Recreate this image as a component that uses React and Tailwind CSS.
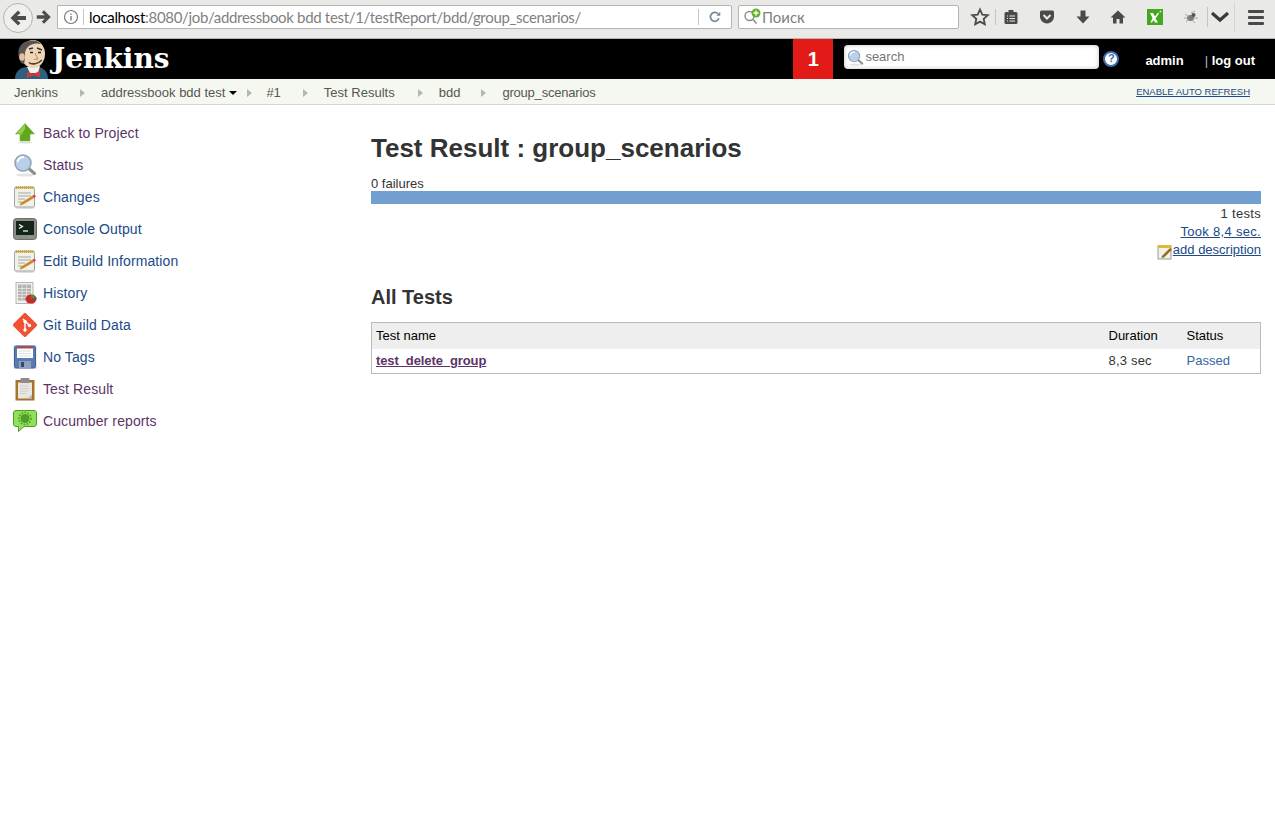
const sans = "font-['Liberation_Sans',Arial,sans-serif]";

const BackArrow = ({ className }) => (
    <svg viewBox="0 0 20 20" className={className}>
        <path d="M2.5 10 L10 2.5 L12.5 5 L9 8 H18 V12 H9 L12.5 15 L10 17.5 Z" fill="#4d4d4d" />
    </svg>
);

const ForwardArrow = ({ className }) => (
    <svg viewBox="0 0 20 20" className={className}>
        <path d="M17.5 10 L10 2.5 L7.5 5 L11 8 H2 V12 H11 L7.5 15 L10 17.5 Z" fill="#4d4d4d" />
    </svg>
);

const Butler = () => (
    <svg viewBox="0 0 36 40" className="h-10 w-9 shrink-0">
        <path d="M1 40 C1 33 5 29 12 28 L24 28 C30 29 34 33 34 40 Z" fill="#2f5f80" />
        <path d="M13 28 L26 27 L24 34 L16 34 Z" fill="#f3f1ea" />
        <path d="M13 33 L19 35 L26 32 L26 38 L19 36.5 L13 39 Z" fill="#d33833" />
        <ellipse cx="19" cy="15" rx="12" ry="14" fill="#f0d6b7" />
        <path d="M7 24 C2 14 4 4 14 2 C18 1 24 1 27 5 C19 3 12 7 11 14 C11 18 11 21 10 25 Z" fill="#555555" />
        <ellipse cx="8" cy="18" rx="2.8" ry="3.8" fill="#e7bfa0" />
        <path d="M15 10 L19 9 M23 9 L28 11" stroke="#333" strokeWidth="1.4" fill="none" />
        <path d="M16 13.5 h3 M24 13.5 h3" stroke="#222" strokeWidth="1.5" />
        <path d="M21 14 L24 20 L20 20.5" stroke="#b98a6a" strokeWidth="1" fill="none" />
        <path d="M15 23.5 C18 26 24 25 28 21" stroke="#5a3a2a" strokeWidth="1.6" fill="none" />
    </svg>
);

const Magnifier = ({ size = 'h-6 w-6' }) => (
    <svg viewBox="0 0 24 24" className={`${size} shrink-0`}>
        <ellipse cx="12" cy="22" rx="9" ry="1.6" fill="#e4e4e4" />
        <path d="M15 15 L21.5 20.5" stroke="#8d8d8d" strokeWidth="3" strokeLinecap="round" />
        <circle cx="10" cy="10" r="8" fill="#b9d0ea" stroke="#8fa2b6" strokeWidth="1.5" />
        <path d="M4.5 9 C5 6 7.5 4 11 4" stroke="#fff" strokeWidth="2" fill="none" />
    </svg>
);

const Notepad = () => (
    <svg viewBox="0 0 24 24" className="h-6 w-6 shrink-0">
        <ellipse cx="12" cy="23" rx="10" ry="1" fill="#dddddd" />
        <rect x="1.5" y="2.5" width="20" height="19.5" rx="1" fill="#f2f1e9" stroke="#a5a5a0" />
        <path d="M2.5 2.5 H20.5" stroke="#c9a63d" strokeWidth="3" strokeDasharray="1.4 0.7" />
        <path d="M5 8 H18 M5 11 H18 M5 14 H12 M5 17 H9" stroke="#a8a8a4" strokeWidth="1" />
        <path d="M7.5 18 L19 11 L21 13 L10 19.5 L7 20.5 Z" fill="#c98a2e" />
        <path d="M19 11 L21 13 L23 11.5 L21.5 9.5 Z" fill="#d8423a" />
    </svg>
);

const MENU = [
    { label: 'Back to Project', color: 'text-[#5c3566]', icon: 'up' },
    { label: 'Status', color: 'text-[#5c3566]', icon: 'search' },
    { label: 'Changes', color: 'text-[#204a87]', icon: 'notepad' },
    { label: 'Console Output', color: 'text-[#204a87]', icon: 'console' },
    { label: 'Edit Build Information', color: 'text-[#204a87]', icon: 'notepad' },
    { label: 'History', color: 'text-[#204a87]', icon: 'history' },
    { label: 'Git Build Data', color: 'text-[#204a87]', icon: 'git' },
    { label: 'No Tags', color: 'text-[#204a87]', icon: 'floppy' },
    { label: 'Test Result', color: 'text-[#5c3566]', icon: 'clipboard' },
    { label: 'Cucumber reports', color: 'text-[#5c3566]', icon: 'cucumber' },
];

const MenuIcon = ({ name }) => {
    if (name === 'search') return <Magnifier />;
    if (name === 'notepad') return <Notepad />;
    if (name === 'up') {
        return (
            <svg viewBox="0 0 24 24" className="h-6 w-6 shrink-0">
                <path d="M12 2.5 L21.5 13 H17 V20 H7 V13 H2.5 Z" fill="#5fa81e" stroke="#7cb342" strokeWidth="0.6" />
                <path d="M12 3 L3.5 12.5 H7.5 V15 L12 8 Z" fill="#95cf4e" />
                <ellipse cx="12" cy="21.5" rx="7" ry="1" fill="#dddddd" />
            </svg>
        );
    }
    if (name === 'console') {
        return (
            <svg viewBox="0 0 24 24" className="h-6 w-6 shrink-0">
                <rect x="0.5" y="1.5" width="23" height="21" rx="3" fill="#8b8d88" stroke="#6c6e6a" />
                <rect x="3" y="4" width="18" height="14" fill="#16251a" />
                <path d="M6 7.5 L9.5 9.5 L6 11.5" stroke="#fff" strokeWidth="1.2" fill="none" />
                <path d="M10 14 H15" stroke="#fff" strokeWidth="1.2" />
                <rect x="16" y="19.5" width="1.5" height="1" fill="#8ae234" />
            </svg>
        );
    }
    if (name === 'history') {
        return (
            <svg viewBox="0 0 24 24" className="h-6 w-6 shrink-0">
                <rect x="3" y="1.5" width="17" height="21" fill="#f0f0ee" stroke="#b5b5b5" />
                <rect x="5" y="3.5" width="13" height="16" fill="#b4b5b2" />
                <path d="M5 7.5 H18 M5 10.5 H18 M5 13.5 H18 M5 16.5 H18 M9 3.5 V19.5 M13.5 3.5 V19.5" stroke="#e4e4e2" strokeWidth="0.8" />
                <ellipse cx="18" cy="18" rx="5.5" ry="4.5" fill="#cc2a2a" />
                <path d="M18 18 L18 13.5 A5.5 4.5 0 0 1 23 16 Z" fill="#4e9a06" />
                <path d="M18 18 L23 16 A5.5 4.5 0 0 1 23.5 18 Z" fill="#3465a4" />
            </svg>
        );
    }
    if (name === 'git') {
        return (
            <svg viewBox="0 0 24 24" className="h-6 w-6 shrink-0">
                <rect x="3" y="3" width="18" height="18" rx="2" transform="rotate(45 12 12)" fill="#f05033" />
                <path d="M10 6 L16.5 12.5 M12 8.5 V17" stroke="#fff" strokeWidth="1.5" fill="none" />
                <circle cx="12" cy="8.5" r="1.7" fill="#fff" />
                <circle cx="16.5" cy="12.5" r="1.7" fill="#fff" />
                <circle cx="12" cy="17" r="1.7" fill="#fff" />
            </svg>
        );
    }
    if (name === 'floppy') {
        return (
            <svg viewBox="0 0 24 24" className="h-6 w-6 shrink-0">
                <rect x="0" y="0" width="24" height="24" fill="#eeeeee" />
                <rect x="1.5" y="1" width="21" height="22" rx="1.5" fill="#5a7bb0" stroke="#3f5f94" />
                <rect x="4" y="2" width="16" height="11" fill="#ffffff" />
                <rect x="4" y="2" width="16" height="1.5" fill="#d63a32" />
                <path d="M6 6 H18 M6 8.5 H18 M6 11 H18" stroke="#dddddd" strokeWidth="1" />
                <rect x="6" y="16" width="12" height="7" fill="#8ea0bb" />
                <rect x="8" y="17" width="3" height="5" fill="#35496b" />
            </svg>
        );
    }
    if (name === 'clipboard') {
        return (
            <svg viewBox="0 0 24 24" className="h-6 w-6 shrink-0">
                <rect x="2.5" y="3" width="19" height="20.5" rx="0.5" fill="#a8722a" />
                <rect x="5" y="5.5" width="14" height="16" fill="#e8e6e0" />
                <path d="M7 9 H15 M7 11.5 H16 M7 14 H15 M7 16.5 H13" stroke="#d2d0ca" strokeWidth="1.2" />
                <path d="M19 21.5 H15 L19 17.5 Z" fill="#b8b6b0" />
                <rect x="7.5" y="1" width="9" height="5" rx="1" fill="#8c8c88" />
            </svg>
        );
    }
    return (
        <svg viewBox="0 0 24 24" className="h-6 w-6 shrink-0">
            <path d="M3 1.5 H21 C22.5 1.5 23.5 2.5 23.5 4 V15 C23.5 16.5 22.5 17.5 21 17.5 H11 L5.5 22.5 V17.5 H3 C1.5 17.5 0.5 16.5 0.5 15 V4 C0.5 2.5 1.5 1.5 3 1.5 Z" fill="#8fe05a" stroke="#4f9e2a" />
            <circle cx="12" cy="9.5" r="4.5" fill="#4f9e2a" />
            <circle cx="12" cy="9.5" r="6" fill="none" stroke="#4f9e2a" strokeWidth="1.6" strokeDasharray="1.6 1.4" />
        </svg>
    );
};

const CRUMBS = [
    { label: 'Jenkins', text: 'mr-[22px]', arrow: 'mr-4' },
    { label: 'addressbook bdd test', arrow: 'mr-[14px]', menu: true },
    { label: '#1', text: 'mr-[22px]', arrow: 'mr-4' },
    { label: 'Test Results', text: 'mr-[23px]', arrow: 'mr-4' },
    { label: 'bdd', text: 'mr-[21px]', arrow: 'mr-4' },
];

const CrumbArrow = ({ className }) => (
    <span className={`h-0 w-0 border-y-[4px] border-l-[5px] border-y-transparent border-l-[#b4b8b0] ${className}`} />
);

const BrowserBar = () => (
    <div className="flex h-[39px] items-center border-b border-[#b5b5b3] bg-[#e9e9e8] pb-1 pr-2">
        <div className="relative flex h-full w-[57px] shrink-0 items-center">
            <div className="ml-[3px] mt-[1px] flex h-[30px] w-[30px] items-center justify-center rounded-full border border-[#b4b4b2] bg-[#efefee]">
                <BackArrow className="h-5 w-5" />
            </div>
            <ForwardArrow className="ml-[2px] h-[18px] w-[18px]" />
        </div>
        <div className="flex h-[24px] w-[675px] shrink-0 items-center rounded-r-[2px] border border-[#b4b4b2] bg-white font-['Lato',sans-serif] text-[15px] tracking-[-0.32px] text-[#7f7f7f]">
            <svg viewBox="0 0 16 16" className="ml-[5px] h-4 w-4 shrink-0">
                <circle cx="8" cy="8" r="6.5" fill="none" stroke="#7a7a7a" strokeWidth="1.2" />
                <path d="M8 7 V11.5 M8 4.5 V5.8" stroke="#7a7a7a" strokeWidth="1.4" />
            </svg>
            <span className="ml-[4px] mr-[5px] h-[16px] w-px bg-[#c4c4c4]" />
            <span className="whitespace-nowrap"><span className="text-black">localhost</span>:8080/job/addressbook bdd test/1/testReport/bdd/group_scenarios/</span>
            <span className="ml-auto h-[16px] w-px bg-[#c4c4c4]" />
            <svg viewBox="0 0 16 16" className="mx-[9px] h-[14px] w-[14px] shrink-0">
                <path d="M12.5 9.5 A5 5 0 1 1 11.5 4.5" fill="none" stroke="#7b8a9a" strokeWidth="2" />
                <path d="M9.5 6.5 H14 V2 Z" fill="#7b8a9a" />
            </svg>
        </div>
        <div className="ml-[6px] flex h-[24px] w-[221px] shrink-0 items-center rounded-[2px] border border-[#b4b4b2] bg-white font-['Lato',sans-serif] text-[15px] text-[#7f7f7f]">
            <div className="relative ml-[4px] h-[18px] w-[19px] shrink-0">
                <svg viewBox="0 0 19 18" className="h-[18px] w-[19px]">
                    <circle cx="6.5" cy="8" r="4.5" fill="none" stroke="#8c8c8c" strokeWidth="1.4" />
                    <path d="M10 11.5 L13.5 15.5" stroke="#8c8c8c" strokeWidth="1.6" />
                    <circle cx="13" cy="5" r="4.5" fill="#63b32a" />
                    <path d="M13 2.5 V7.5 M10.5 5 H15.5" stroke="#fff" strokeWidth="1.4" />
                </svg>
            </div>
            <span>Поиск</span>
        </div>
        <svg viewBox="0 0 20 20" className="ml-[11px] h-5 w-5 shrink-0">
            <path d="M10 2.5 L12.3 7.6 L17.8 8.2 L13.7 11.9 L14.8 17.3 L10 14.6 L5.2 17.3 L6.3 11.9 L2.2 8.2 L7.7 7.6 Z" fill="none" stroke="#4a4a4a" strokeWidth="1.8" />
        </svg>
        <span className="ml-[5px] h-[16px] w-px bg-[#c4c4c4]" />
        <svg viewBox="0 0 16 16" className="ml-[7px] h-4 w-4 shrink-0">
            <rect x="1.5" y="3" width="13" height="12" rx="1.5" fill="#4a4a4a" />
            <rect x="5.5" y="1" width="5" height="3.5" fill="#4a4a4a" />
            <path d="M4 7 H5 M6.5 7 H12 M4 9.5 H5 M6.5 9.5 H12 M4 12 H5 M6.5 12 H12" stroke="#e9e9e8" strokeWidth="1.1" />
        </svg>
        <svg viewBox="0 0 16 16" className="ml-[20px] h-4 w-4 shrink-0">
            <path d="M1 3 C1 2 2 1.5 3 1.5 H13 C14 1.5 15 2 15 3 V7.5 C15 11.5 11.5 14.5 8 14.5 C4.5 14.5 1 11.5 1 7.5 Z" fill="#4a4a4a" />
            <path d="M4.5 6 L8 9.5 L11.5 6" stroke="#e9e9e8" strokeWidth="2" fill="none" />
        </svg>
        <svg viewBox="0 0 16 16" className="ml-[20px] h-4 w-4 shrink-0">
            <path d="M5.5 1.5 H10.5 V7.5 H14.5 L8 14.5 L1.5 7.5 H5.5 Z" fill="#4a4a4a" />
        </svg>
        <svg viewBox="0 0 16 16" className="ml-[19px] h-4 w-4 shrink-0">
            <path d="M8 1.5 L15.5 8.5 H13 V14.5 H9.5 V10 H6.5 V14.5 H3 V8.5 H0.5 Z" fill="#4a4a4a" />
        </svg>
        <svg viewBox="0 0 16 16" className="ml-[21px] h-4 w-4 shrink-0">
            <rect width="16" height="16" fill="#45a71f" />
            <path d="M3 4 H6 L8 7.5 L11 3.5 L12 4.5 L8.5 9.5 L11 13.5 H8 L6.5 11 L5 13.5 H3.5 L5.5 9 Z" fill="#fff" />
            <circle cx="13.5" cy="2.5" r="1" fill="#c9f2a6" />
        </svg>
        <svg viewBox="0 0 16 16" className="ml-[20px] h-4 w-4 shrink-0">
            <ellipse cx="7.5" cy="9" rx="3.5" ry="3" fill="#7b7b7b" />
            <circle cx="10.5" cy="6" r="2" fill="#555" />
            <path d="M2 5 L6 8 M1 9 L5 9 M3 13 L6 10 M9 11 L12 14 M11 9 L15 9 M8 4 L12 2" stroke="#9a9a9a" strokeWidth="0.8" />
        </svg>
        <span className="ml-[8px] h-[20px] w-px bg-[#c4c4c4]" />
        <svg viewBox="0 0 20 12" className="ml-[2px] h-[12px] w-[20px] shrink-0">
            <path d="M2 2 L10 9 L18 2" fill="none" stroke="#3a3a3a" strokeWidth="3.2" />
        </svg>
        <span className="ml-[4px] h-[30px] w-px bg-[#d6d6d5]" />
        <div className="ml-[13px] flex w-4 shrink-0 flex-col gap-[3px]">
            <span className="h-[3px] rounded-[1px] bg-[#4a4a4a]" />
            <span className="h-[3px] rounded-[1px] bg-[#4a4a4a]" />
            <span className="h-[3px] rounded-[1px] bg-[#4a4a4a]" />
        </div>
    </div>
);

const JenkinsHeader = () => (
    <header className="flex h-10 items-center bg-black pl-[14px] text-white">
        <Butler />
        <span className="ml-[2px] font-['DejaVu_Serif',serif] text-[28px] font-bold leading-[38px]">Jenkins</span>
        <div className="ml-auto flex h-full w-10 items-center justify-center bg-[#e31b18] text-[20px] font-bold">1</div>
        <div className="mb-1 ml-[11px] flex h-[24px] w-[255px] items-center rounded-[4px] bg-white pl-[3px] text-[13px] text-[#757575] shadow-[inset_0_0_4px_rgba(0,0,0,0.25)]">
            <Magnifier size="h-[17px] w-[17px]" />
            <span className="ml-[1px]">search</span>
        </div>
        <div className="mb-[1px] ml-[4px] flex h-4 w-4 items-center justify-center rounded-full border-2 border-[#3d6bab] bg-white text-[11px] font-bold text-[#3d6bab]">?</div>
        <span className="ml-[26px] mt-1 text-[13px] font-bold">admin</span>
        <span className="ml-[21px] mt-1 text-[13px] font-bold"><span className="font-normal text-[#bbbbbb]">|</span> log out</span>
        <span className="w-5" />
    </header>
);

const Breadcrumbs = () => (
    <nav className="flex h-[26px] items-center border-b border-[#d3d7cf] bg-[#f5f8f0] pl-[14px] pt-[2px] text-[13px] text-[#555753]">
        {CRUMBS.map((crumb) => (
            <span key={crumb.label} className="flex items-center">
                <span className={crumb.menu ? 'mr-[4px]' : crumb.text}>{crumb.label}</span>
                {crumb.menu ? <span className="mr-[10px] h-0 w-0 border-x-[4px] border-t-[4px] border-x-transparent border-t-black" /> : null}
                <CrumbArrow className={crumb.arrow} />
            </span>
        ))}
        <span className="tracking-[-0.2px]">group_scenarios</span>
        <a className="ml-auto mr-[25px] text-[9.5px] text-[#204a87] underline">ENABLE AUTO REFRESH</a>
    </nav>
);

const Sidebar = () => (
    <aside className="w-[371px] shrink-0 pl-[13px] pt-3">
        {MENU.map((item) => (
            <div key={item.label} className="flex h-8 items-center gap-[6px]">
                <MenuIcon name={item.icon} />
                <span className={`text-[14px] tracking-[0.1px] ${item.color}`}>{item.label}</span>
            </div>
        ))}
    </aside>
);

const ResultsTable = () => (
    <table className="w-[890px] table-fixed border-collapse border border-[#bbbbbb] text-[13px]">
        <thead>
            <tr className="h-[26px] bg-[#eeeeee] text-left text-black">
                <th className="pl-1 font-normal">Test name</th>
                <th className="w-[78px] pl-1 font-normal">Duration</th>
                <th className="w-[78px] pl-1 font-normal">Status</th>
            </tr>
        </thead>
        <tbody>
            <tr className="h-[25px]">
                <td className="pl-1 font-bold tracking-[-0.1px] text-[#5c3566]"><a className="underline">test_delete_group</a></td>
                <td className="pl-1 tracking-[0.2px] text-[#333333]">8,3 sec</td>
                <td className="pl-1 text-[#3465a4]">Passed</td>
            </tr>
        </tbody>
    </table>
);

const App = () => (
    <div className={`min-h-screen bg-white ${sans}`}>
        <BrowserBar />
        <JenkinsHeader />
        <Breadcrumbs />
        <div className="flex">
            <Sidebar />
            <main className="w-[890px] text-[13px] text-[#333333]">
                <h1 className="mt-[28px] text-[26px] font-bold leading-[30px]">Test Result : group_scenarios</h1>
                <p className="mt-[12px] leading-[18px]">0 failures</p>
                <div className="mt-[-2px] h-[13px] bg-[#729fcf]" />
                <div className="flex flex-col items-end leading-[18px]">
                    <span className="mt-[1px] tracking-[0.3px]">1 tests</span>
                    <a className="tracking-[0.3px] text-[#204a87] underline">Took 8,4 sec.</a>
                    <span className="flex h-[18px] items-center">
                        <svg viewBox="0 0 16 16" className="h-4 w-4 translate-y-[2px]">
                            <rect x="1" y="2" width="13" height="13" fill="#f2f1e9" stroke="#999" />
                            <rect x="1" y="1" width="13" height="3" fill="#e0b83a" />
                            <path d="M5 12 L13 4 L15 5.5 L7 13.5 L4.5 14 Z" fill="#8f6a1f" />
                        </svg>
                        <a className="text-[#204a87] underline">add description</a>
                    </span>
                </div>
                <h2 className="mb-[13px] mt-[26px] text-[20px] font-bold leading-[24px]">All Tests</h2>
                <ResultsTable />
            </main>
        </div>
    </div>
);

export default App;
